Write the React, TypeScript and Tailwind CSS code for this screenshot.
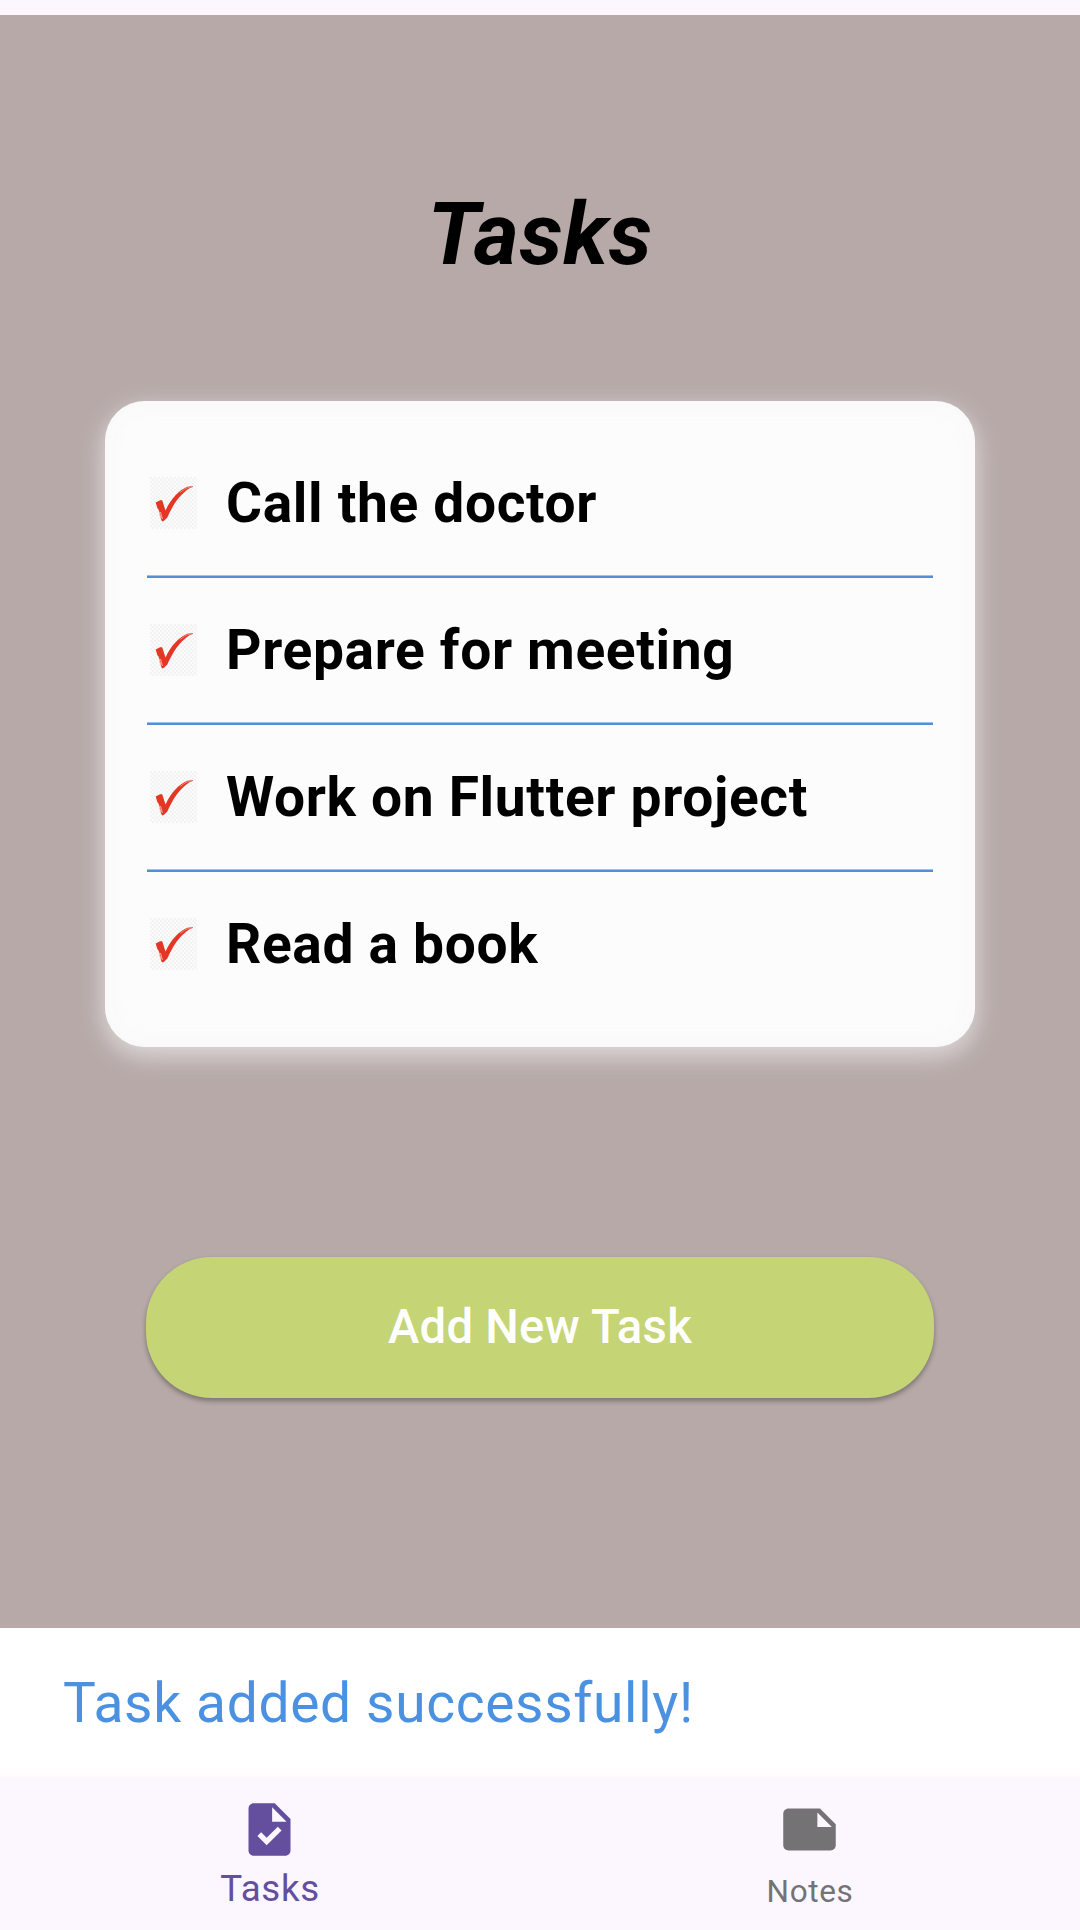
const tasks = ['Call the doctor', 'Prepare for meeting', 'Work on Flutter project', 'Read a book'];

function CheckIcon() {
  return (
    <svg className="mb-[2px] h-[52px] w-[47px] shrink-0" viewBox="0 0 47 52" aria-hidden="true">
      <defs>
        <pattern id="checker" width="4" height="4" patternUnits="userSpaceOnUse">
          <rect width="4" height="4" fill="#fbfbfb" />
          <rect width="2" height="2" fill="#f3f3f3" />
          <rect x="2" y="2" width="2" height="2" fill="#f3f3f3" />
        </pattern>
      </defs>
      <rect width="47" height="52" fill="url(#checker)" />
      <path
        d="M5.7 25.5L10 23.2L12.2 23.2L15.5 33.5C21 21.5 29 13 37.5 9.7L43 8.9L42.6 10L39.5 11.2C29 18 23 28 17.3 40.5L14 43.8L12 44.5L9.8 39L9.2 35L7 30Z"
        fill="#e43624"
      />
      <path d="M8 32L11 41M10.5 35L12.4 42" stroke="#fafafa" strokeWidth=".6" />
      <path d="M30 15.5L36 11.3L42.5 9.4" stroke="#f0a39b" strokeWidth=".7" fill="none" />
    </svg>
  );
}

function TaskIcon() {
  return (
    <svg className="mr-px size-[63px]" viewBox="0 0 24 24" fill="currentColor" aria-hidden="true">
      <path d="M14 2H6c-1.1 0-1.99.9-1.99 2L4 20c0 1.1.89 2 1.99 2H18c1.1 0 2-.9 2-2V8l-6-6zm-3.06 16L7.4 14.46l1.41-1.41 2.12 2.12 4.24-4.24 1.41 1.41L10.94 18zM13 9V3.5L18.5 9H13z" />
    </svg>
  );
}

function NoteIcon() {
  return (
    <svg className="mr-px size-[63px]" viewBox="0 0 24 24" fill="currentColor" aria-hidden="true">
      <path d="M22 10l-6-6H4c-1.1 0-2 .9-2 2v12.01c0 1.1.9 1.99 2 1.99l16-.01c1.1 0 2-.89 2-1.99v-8zm-7-4.5l5.5 5.5H15V5.5z" />
    </svg>
  );
}

export default function App() {
  return (
    <div className="flex h-[1930px] w-[1080px] flex-col overflow-hidden bg-[#fcf7fe] font-['Roboto',sans-serif] tracking-[0.656px]">
      <main className="mt-[15px] flex h-[1613px] shrink-0 flex-col items-center bg-[#b6a9a8] pt-[170px]">
        <h1 className="text-[86.6px] leading-[100px] font-bold text-black italic">Tasks</h1>

        <ul className="mt-[116px] flex h-[646px] w-[870px] flex-col rounded-[40px] bg-[#fcfcfc] px-[42px] pt-[30px] shadow-[0_8px_26px_1px_rgba(240,240,240,0.72),inset_0_0_26px_rgba(246,246,246,0.8)]">
          {tasks.map((task) => (
            <li
              key={task}
              className="flex h-[147px] items-center border-b-2 border-[#5390d3] pl-[3px] shadow-[inset_0_-1px_0_#9cc4ea] last:border-b-transparent last:shadow-none"
            >
              <CheckIcon />
              <span className="mb-[2px] ml-[29px] text-[55.1px] leading-[64px] font-bold whitespace-nowrap text-black">
                {task}
              </span>
            </li>
          ))}
        </ul>

        <button className="mt-[209.5px] h-[141.5px] w-[788px] rounded-[66px] bg-[#c5d475] text-[47.25px] font-medium tracking-[0.26px] text-white shadow-[0_3px_5px_rgba(0,0,0,0.32)]">
          Add New Task
        </button>
      </main>

      <div
        role="status"
        className="flex h-[150px] shrink-0 items-center bg-linear-to-b from-white from-93% to-[#fdfafe] pl-[63px]"
      >
        <span className="text-[55.1px] leading-[64px] text-[#4b91e2]">Task added successfully!</span>
      </div>

      <nav className="grid flex-1 grid-cols-2 pt-5">
        <a className="flex flex-col items-center text-[#644f9f]">
          <TaskIcon />
          <span className="mt-[6px] text-[36.75px] leading-[44px]">Tasks</span>
        </a>
        <a className="flex flex-col items-center text-[#757276]">
          <NoteIcon />
          <span className="mt-[11px] text-[31.5px] leading-[40px]">Notes</span>
        </a>
      </nav>
    </div>
  );
}
